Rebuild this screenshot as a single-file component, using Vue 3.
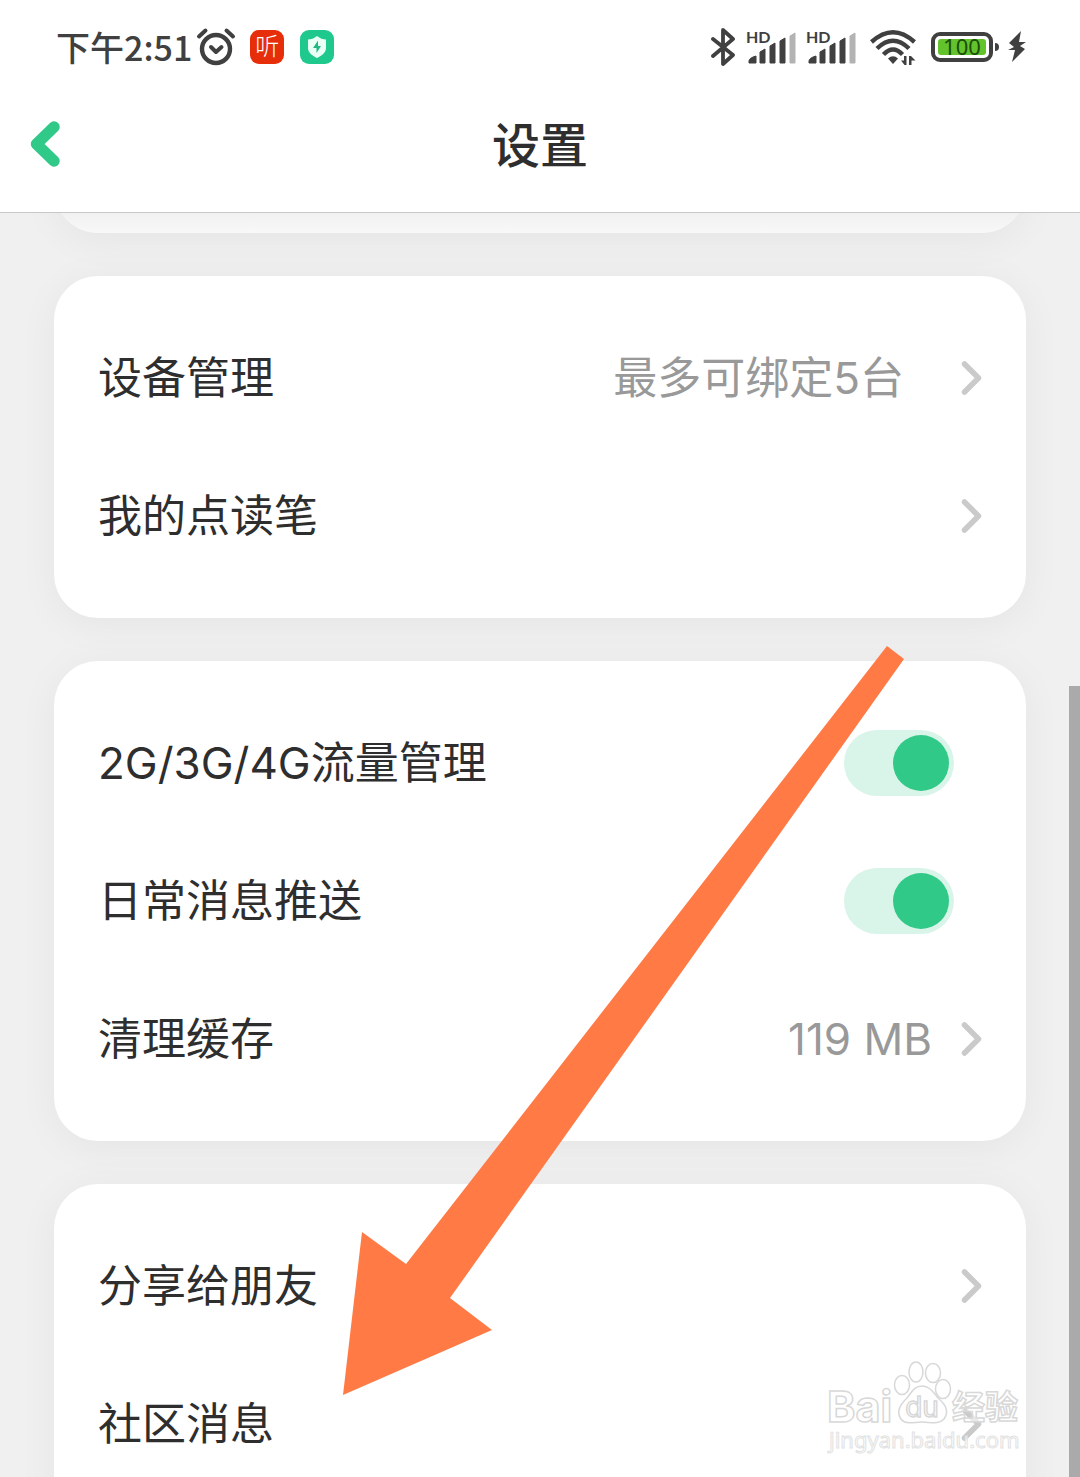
<template>
  <div class="screen">
    <div class="status-bar">
      <div class="status-left">
        <span class="clock">下午2:51</span>
        <svg class="alarm" width="40" height="40" viewBox="0 0 40 40">
          <g fill="none" stroke="#404040" stroke-linecap="round" stroke-linejoin="round">
            <circle cx="20" cy="22" r="14" stroke-width="4.4" />
            <path d="M3 9.5 L9.5 3.5 M37 9.5 L30.5 3.5" stroke-width="4" />
            <path d="M15 20 L20 25 L25.5 20" stroke-width="4" />
          </g>
        </svg>
        <span class="app-badge red">听</span>
        <span class="app-badge green">
          <svg width="20" height="22" viewBox="0 0 20 22">
            <path d="M10 0 C13 2.5 16 3.5 19 3.5 V12 C19 17 14 20 10 22 C6 20 1 17 1 12 V3.5 C4 3.5 7 2.5 10 0 Z" fill="#eafff6" />
            <path d="M11 4.5 L6 12 H9.5 V17 L14 10 H11 Z" fill="#22b883" />
          </svg>
        </span>
      </div>

      <div class="status-right">
        <svg width="26" height="40" viewBox="0 0 26 40">
          <path d="M2 12 L22 28 L12 37 V3 L22 12 L2 29" fill="none" stroke="#404040" stroke-width="3.8" stroke-linejoin="round" stroke-linecap="round" />
        </svg>
        <svg v-for="n in 2" :key="n" class="signal" width="50" height="36" viewBox="0 0 50 36">
          <text x="-1" y="14" class="hd">HD</text>
          <path d="M2 34 V32 Q2 29 9 27 V34 Z M13 34 V23 L18 20 V34 Z M23 34 V17 L28 14 V34 Z M33 34 V12 L38 9 V34 Z" fill="#404040" stroke="#404040" stroke-linejoin="round" />
          <path d="M43 34 V7 L48 4 V34 Z" fill="#b3b3b3" stroke="#b3b3b3" stroke-linejoin="round" />
        </svg>
        <svg class="wifi" width="46" height="36" viewBox="0 0 46 36">
          <g fill="none" stroke="#404040" stroke-width="4.4">
            <path d="M1.5 13 Q23 -6.5 44.5 13" />
            <path d="M7 19.5 Q23 4 39 19.5" />
            <path d="M13.5 25.5 Q23 15.5 32.5 25.5" />
          </g>
          <path d="M18 29.5 Q23 25 28 29.5 L23 35 Z" fill="#404040" />
          <path d="M36.5 27 V36 H34.5 L31 31.5 H34 V27 Z M39 36 V27 H41 L45.5 31.5 H41.5 V36 Z" fill="#404040" />
        </svg>
        <svg class="battery" width="68" height="32" viewBox="0 0 68 32">
          <rect x="2" y="3" width="58" height="26" rx="7" fill="none" stroke="#404040" stroke-width="4" />
          <rect x="7" y="8" width="48" height="16" rx="3" fill="#62c32c" />
          <path d="M64 12 Q68 12 68 16 Q68 20 64 20 Z" fill="#404040" />
          <text x="31" y="24" text-anchor="middle" class="percent">100</text>
        </svg>
        <svg class="bolt" width="18" height="32" viewBox="0 0 18 32">
          <path d="M13 0 L1 12 L6 16 L0 19 H7 L4 31 L17 18 L12 15 L18 11 H11 Z" fill="#404040" />
        </svg>
      </div>
    </div>

    <header class="title-bar">
      <button type="button" class="back" aria-label="返回">
        <svg width="32" height="48" viewBox="0 0 32 48">
          <path d="M24 7 L6.5 24 L24 41" fill="none" stroke="#30c988" stroke-width="11.5" stroke-linecap="round" stroke-linejoin="round" />
        </svg>
      </button>
      <h1>设置</h1>
    </header>

    <main class="list">
      <div class="card scrolled"></div>
      <section v-for="(group, i) in groups" :key="i" class="card">
        <template v-for="item in group" :key="item.label">
          <label v-if="item.type === 'switch'" class="row">
            <span class="label">{{ item.label }}</span>
            <input v-model="item.on" type="checkbox" class="switch" />
          </label>
          <a v-else href="#" class="row" @click.prevent>
            <span class="label">{{ item.label }}</span>
            <span v-if="item.value" class="value" :class="{ hint: item.hint }">{{ item.value }}</span>
            <svg class="chevron" width="22" height="36" viewBox="0 0 22 36">
              <path d="M4.5 4 L18.5 18 L4.5 32" fill="none" stroke="#cacaca" stroke-width="5.5" stroke-linecap="round" stroke-linejoin="round" />
            </svg>
          </a>
        </template>
      </section>
    </main>

    <div class="scrollbar"></div>

    <svg class="pointer" width="562" height="750" viewBox="0 0 562 750">
      <polygon points="544,0 561,13 107,652 149,684 0,749 19,586 63,618" fill="#ff7a45" />
    </svg>

    <svg class="watermark" width="200" height="100" viewBox="0 0 200 100">
      <g fill="#fff" fill-opacity="0.6" stroke="#d8d8d8" stroke-width="1.5">
        <text x="2" y="64" class="wm-name">Bai</text>
        <ellipse cx="77" cy="27" rx="7.5" ry="9.5" />
        <ellipse cx="91" cy="14" rx="7" ry="10" />
        <ellipse cx="108" cy="15" rx="7.5" ry="9.5" />
        <ellipse cx="118" cy="31" rx="7.5" ry="9.5" />
        <path d="M97 28 C106 28 109 36 114 41 C121 47 124 54 119 61 C114 67 105 64 97 64 C89 64 80 67 76 61 C71 54 75 47 81 41 C86 36 88 28 97 28 Z" />
        <text x="97" y="59" text-anchor="middle" class="wm-du">du</text>
        <text x="127" y="61" class="wm-cn">经验</text>
        <text x="4" y="90" class="wm-url">jingyan.baidu.com</text>
      </g>
    </svg>
  </div>
</template>

<script setup>
import { ref } from 'vue'

const groups = ref([
  [
    { label: '设备管理', value: '最多可绑定5台', hint: true },
    { label: '我的点读笔' }
  ],
  [
    { label: '2G/3G/4G流量管理', type: 'switch', on: true },
    { label: '日常消息推送', type: 'switch', on: true },
    { label: '清理缓存', value: '119 MB' }
  ],
  [
    { label: '分享给朋友' },
    { label: '社区消息' }
  ]
])
</script>

<style>
body {
  margin: 0;
  background: #f0f0f0;
}
</style>

<style scoped>
.screen {
  position: relative;
  display: flex;
  flex-direction: column;
  height: 100vh;
  overflow: hidden;
  background: #f0f0f0;
  color: #2e2e2e;
  font-family: Inter, "Noto Sans CJK SC", sans-serif;
}

.status-bar {
  display: flex;
  flex: none;
  align-items: center;
  justify-content: space-between;
  box-sizing: border-box;
  height: 80px;
  padding: 14px 54px 0 56px;
  background: #fff;
}

.status-left,
.status-right {
  display: flex;
  align-items: center;
}

.clock {
  color: #404040;
  font-family: "Noto Sans CJK SC", sans-serif;
  font-size: 34px;
  font-weight: 500;
  line-height: 40px;
}

.alarm {
  margin: 0 14px 0 4px;
}

.app-badge {
  display: flex;
  align-items: center;
  justify-content: center;
  width: 34px;
  height: 34px;
  border-radius: 9px;
  color: #fff;
  font-size: 24px;
  font-weight: 300;
  line-height: 34px;
}

.app-badge.red {
  margin-right: 16px;
  background: #e62e0b;
}

.app-badge.green {
  background: #1fc98e;
}

.signal {
  margin-left: 10px;
  overflow: visible;
}

.hd {
  fill: #404040;
  font-family: Lato, sans-serif;
  font-size: 16px;
  font-weight: 700;
}

.wifi {
  margin-left: 13px;
}

.battery {
  margin-left: 15px;
}

.percent {
  fill: #1c4d0a;
  font-family: "Noto Sans", sans-serif;
  font-size: 22px;
}

.bolt {
  margin-left: 9px;
}

.title-bar {
  position: relative;
  z-index: 1;
  display: grid;
  flex: none;
  grid-template-columns: 60px 1fr 60px;
  align-items: center;
  box-sizing: border-box;
  height: 133px;
  padding: 0 30px;
  border-bottom: 1px solid #c8c8c8;
  background: #fff;
}

.back {
  display: flex;
  padding: 0 0 4px;
  border: 0;
  background: none;
  cursor: pointer;
}

h1 {
  margin: 0;
  font-size: 48px;
  font-weight: 500;
  line-height: 60px;
  text-align: center;
}

.list {
  display: flex;
  flex: 1;
  flex-direction: column;
  gap: 43px;
  min-height: 0;
  padding: 0 54px;
}

.card {
  flex: none;
  padding: 33px 0;
  border-radius: 44px;
  background: #fff;
  box-shadow: 0 6px 40px rgba(0, 0, 0, 0.05);
}

/* tail of the card already scrolled under the title bar */
.card.scrolled {
  height: 24px;
  margin-top: -70px;
  background: linear-gradient(#f0f0f0 75%, #f8f8f8);
}

.row {
  display: flex;
  align-items: center;
  height: 138px;
  padding: 0 44px;
  color: inherit;
  font-size: 44px;
  line-height: 60px;
  text-decoration: none;
  cursor: pointer;
}

.label {
  flex: 1;
}

.value {
  margin-right: 28px;
  color: #999;
}

.value.hint {
  margin-right: 56px;
}

.chevron {
  flex: none;
}

.switch {
  display: flex;
  align-items: center;
  box-sizing: border-box;
  width: 110px;
  height: 66px;
  margin: 0 28px 0 0;
  padding: 0 5px;
  border-radius: 33px;
  background: #e6e6e6;
  appearance: none;
  cursor: pointer;
}

.switch::before {
  width: 56px;
  height: 56px;
  border-radius: 50%;
  background: #fff;
  content: "";
}

.switch:checked {
  justify-content: flex-end;
  background: #d9f4e8;
}

.switch:checked::before {
  background: #30c988;
}

.scrollbar {
  position: absolute;
  top: 686px;
  right: 0;
  bottom: 0;
  z-index: 1;
  width: 11px;
  background: #aaa;
}

.pointer {
  position: absolute;
  top: 646px;
  left: 343px;
  z-index: 2;
  pointer-events: none;
}

.watermark {
  position: absolute;
  right: 55px;
  bottom: 19px;
  z-index: 2;
  overflow: visible;
  pointer-events: none;
}

.wm-name {
  font-size: 43px;
  font-weight: 700;
}

.wm-du {
  font-size: 28px;
}

.wm-cn {
  font-size: 33px;
  font-weight: 700;
}

.wm-url {
  stroke: #e2e2e2;
  stroke-width: 1px;
  font-family: "Noto Sans", sans-serif;
  font-size: 22px;
}
</style>
